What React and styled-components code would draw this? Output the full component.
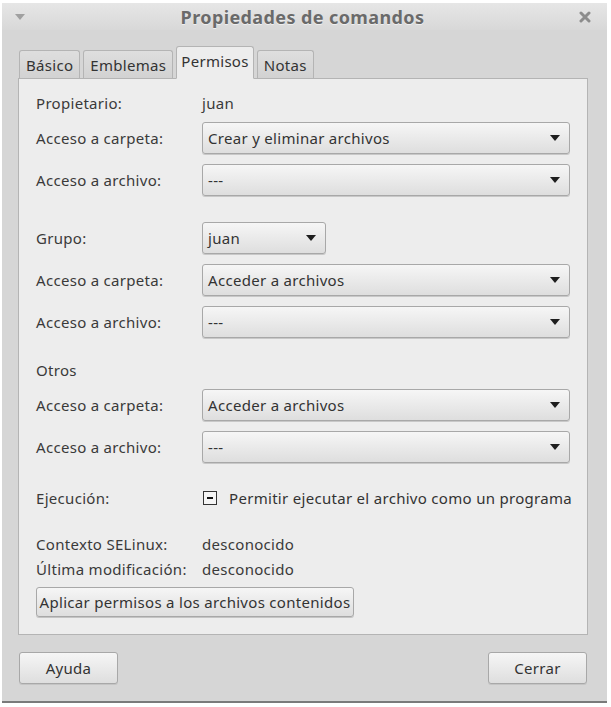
import styled, { createGlobalStyle } from "styled-components";

const Global = createGlobalStyle`
  html, body { margin: 0; padding: 0; background: #ffffff; }
  body {
    font-family: "Noto Sans", "DejaVu Sans", sans-serif;
    font-size: 15px;
    letter-spacing: 0.3px;
    color: #3a3a3a;
  }
`;

const Window = styled.div`
  width: 605px;
  height: 698px;
  margin: 3px 0 0 2px;
  background: #d6d6d6;
  border-bottom: 2px solid #7a7a7a;
  display: flex;
  flex-direction: column;
`;

const TitleBar = styled.div`
  height: 27px;
  display: flex;
  align-items: center;
  justify-content: space-between;
  padding: 0 16px 0 12px;
  background: linear-gradient(#e6e6e6, #d8d8d8);
`;

const Title = styled.div`
  font-weight: bold;
  font-size: 18px;
  letter-spacing: 0.4px;
  color: #6a6a6a;
  text-shadow: 0 1px 0 #efefef;
`;

const Body = styled.div`
  flex: 1;
  display: flex;
  flex-direction: column;
  padding: 16px 19px 0 14px;
`;

const TabRow = styled.div`
  display: flex;
  align-items: flex-end;
  gap: 3px;
  padding-left: 3px;
  height: 32px;
  position: relative;
  z-index: 1;
`;

const Tab = styled.div`
  height: ${(p) => (p.$active ? "33px" : "28px")};
  box-sizing: border-box;
  padding: ${(p) => (p.$active ? "4px 4px 0" : "0 6px")};
  display: flex;
  align-items: ${(p) => (p.$active ? "flex-start" : "center")};
  border: 1px solid #b4b4b4;
  border-bottom: ${(p) => (p.$active ? "1px solid #ededed" : "none")};
  border-radius: 3px 3px 0 0;
  background: ${(p) => (p.$active ? "#ededed" : "linear-gradient(#dedede, #d2d2d2)")};
  color: #333;
  margin-bottom: ${(p) => (p.$active ? "-1px" : "0")};
`;

const Panel = styled.div`
  height: 557px;
  box-sizing: border-box;
  margin-left: 2px;
  background: #ededed;
  border: 1px solid #b4b4b4;
  padding: 15px 17px 0 17px;
  display: flex;
  flex-direction: column;
`;

const Row = styled.div`
  display: grid;
  grid-template-columns: 166px 1fr;
  align-items: center;
  min-height: ${(p) => p.$h || 18}px;
  margin-top: ${(p) => p.$top ?? 10}px;
`;

const Label = styled.div`
  color: #3a3a3a;
  line-height: 18px;
  white-space: nowrap;
`;

const Combo = styled.div`
  width: ${(p) => p.$w || "368px"};
  height: 32px;
  box-sizing: border-box;
  border: 1px solid #a8a8a8;
  border-radius: 3px;
  background: linear-gradient(#f6f6f6, #dedede);
  box-shadow: 0 1px 0 #c8c8c8;
  display: flex;
  align-items: center;
  justify-content: space-between;
  padding: 0 9px 0 5px;
  color: #333;
`;

const Arrow = styled.span`
  width: 0;
  height: 0;
  border-left: 5px solid transparent;
  border-right: 5px solid transparent;
  border-top: 6px solid #1e1e1e;
`;

const Check = styled.span`
  width: 14px;
  height: 14px;
  box-sizing: border-box;
  border: 1px solid #333;
  background: #f4f4f4;
  display: inline-flex;
  align-items: center;
  justify-content: center;
  margin-right: 12px;
  &::after {
    content: "";
    width: 6px;
    height: 2px;
    background: #111;
  }
`;

const CheckLine = styled.div`
  display: flex;
  align-items: center;
  padding-left: 1px;
  color: #333;
  white-space: nowrap;
`;

const Button = styled.div`
  width: ${(p) => p.$w};
  height: ${(p) => p.$h || 32}px;
  box-sizing: border-box;
  border: 1px solid #a8a8a8;
  border-radius: 3px;
  background: linear-gradient(#f6f6f6, #dedede);
  box-shadow: 0 1px 0 #c4c4c4;
  display: flex;
  align-items: center;
  justify-content: center;
  color: #333;
  white-space: nowrap;
`;

const Footer = styled.div`
  display: flex;
  justify-content: space-between;
  padding: 17px 1px 0 3px;
`;

const Combobox = ({ value, w }) => (
  <Combo $w={w}>
    <span>{value}</span>
    <Arrow />
  </Combo>
);

export default function App() {
  return (
    <>
      <Global />
      <Window>
        <TitleBar>
          <svg width="12" height="8" viewBox="0 0 12 8">
            <path d="M1 1 L11 1 L6 7 Z" fill="#a0a0a0" />
          </svg>
          <Title>Propiedades de comandos</Title>
          <svg width="12" height="12" viewBox="0 0 12 12">
            <path d="M2 2 L10 10 M10 2 L2 10" stroke="#8c8c8c" strokeWidth="3" strokeLinecap="round" />
          </svg>
        </TitleBar>
        <Body>
          <TabRow>
            <Tab>Básico</Tab>
            <Tab>Emblemas</Tab>
            <Tab $active>Permisos</Tab>
            <Tab>Notas</Tab>
          </TabRow>
          <Panel>
            <Row $top={0}>
              <Label>Propietario:</Label>
              <Label>juan</Label>
            </Row>
            <Row>
              <Label>Acceso a carpeta:</Label>
              <Combobox value="Crear y eliminar archivos" />
            </Row>
            <Row>
              <Label>Acceso a archivo:</Label>
              <Combobox value="---" />
            </Row>
            <Row $top={26}>
              <Label>Grupo:</Label>
              <Combobox value="juan" w="124px" />
            </Row>
            <Row>
              <Label>Acceso a carpeta:</Label>
              <Combobox value="Acceder a archivos" />
            </Row>
            <Row>
              <Label>Acceso a archivo:</Label>
              <Combobox value="---" />
            </Row>
            <Row $top={23}>
              <Label>Otros</Label>
            </Row>
            <Row>
              <Label>Acceso a carpeta:</Label>
              <Combobox value="Acceder a archivos" />
            </Row>
            <Row>
              <Label>Acceso a archivo:</Label>
              <Combobox value="---" />
            </Row>
            <Row $top={25} $h={20}>
              <Label>Ejecución:</Label>
              <CheckLine>
                <Check />
                Permitir ejecutar el archivo como un programa
              </CheckLine>
            </Row>
            <Row $top={27}>
              <Label>Contexto SELinux:</Label>
              <Label>desconocido</Label>
            </Row>
            <Row $top={7}>
              <Label>Última modificación:</Label>
              <Label>desconocido</Label>
            </Row>
            <Row $top={9} style={{ display: "block" }}>
              <Button $w="318px" $h={30}>Aplicar permisos a los archivos contenidos</Button>
            </Row>
          </Panel>
          <Footer>
            <Button $w="99px">Ayuda</Button>
            <Button $w="99px">Cerrar</Button>
          </Footer>
        </Body>
      </Window>
    </>
  );
}
